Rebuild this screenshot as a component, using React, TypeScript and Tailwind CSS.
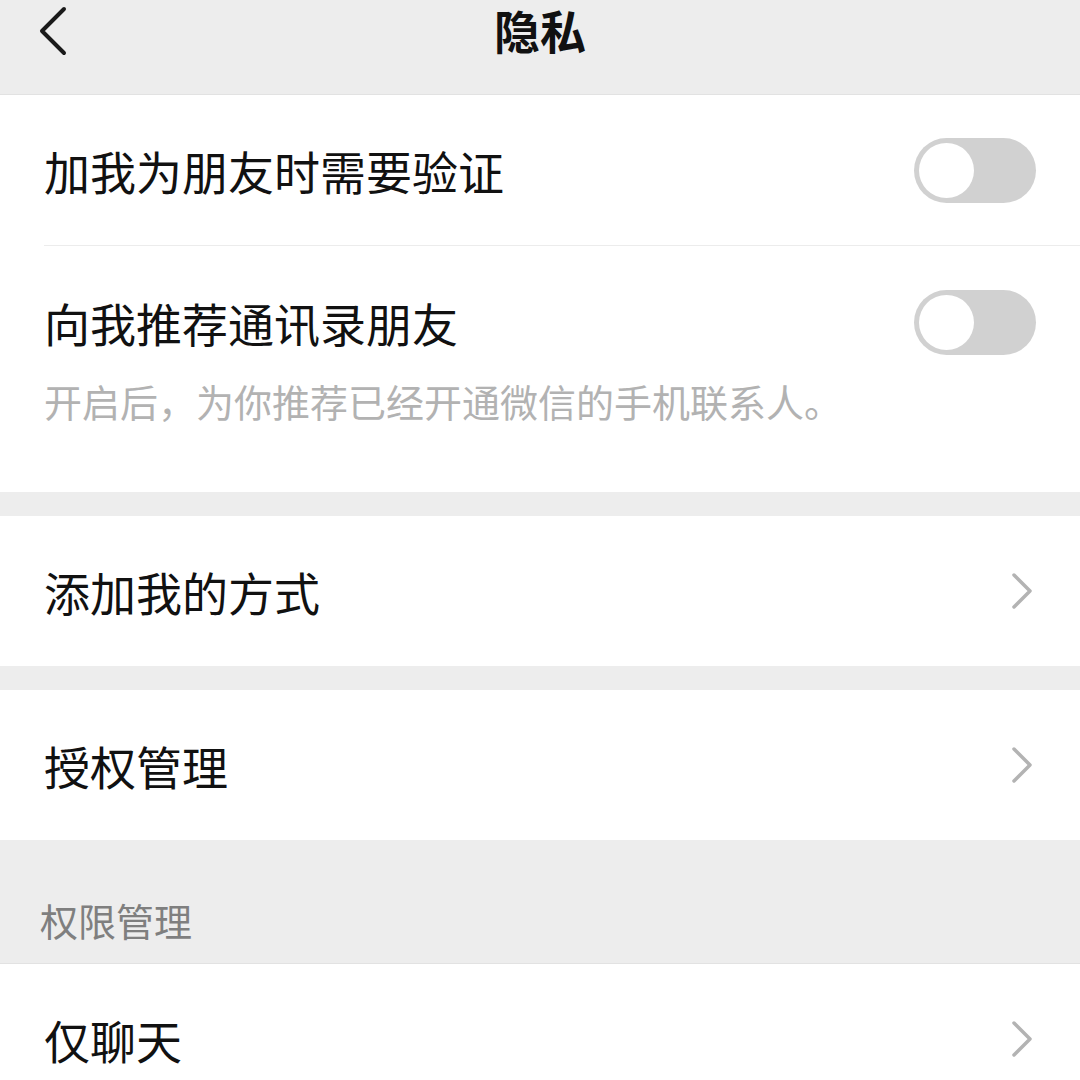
import React from "react";

const font = {
  fontFamily: '"Noto Sans CJK SC", "Noto Sans", sans-serif',
};

function Toggle() {
  return (
    <div className="w-[122px] h-[65px] rounded-full bg-[#d1d1d1] p-[5px] flex items-center shrink-0">
      <div className="w-[55px] h-[55px] rounded-full bg-white" />
    </div>
  );
}

function Chevron() {
  return (
    <svg width="24" height="40" viewBox="0 0 24 40" className="shrink-0 mr-[46px]">
      <polyline
        points="4,4 20,20 4,36"
        fill="none"
        stroke="#b3b3b3"
        strokeWidth="3.5"
        strokeLinecap="round"
        strokeLinejoin="round"
      />
    </svg>
  );
}

function LinkRow({ label }: { label: string }) {
  return (
    <div className="h-[150px] flex items-center justify-between pl-[44px] bg-white">
      <span className="text-[46px] text-[#111]">{label}</span>
      <Chevron />
    </div>
  );
}

export default function App() {
  return (
    <div className="w-[1080px] h-[1080px] overflow-hidden bg-[#ededed]" style={font}>
      {/* Header */}
      <header className="h-[95px] flex items-start justify-center relative border-b border-[#e2e2e2]">
        <svg
          width="40"
          height="56"
          viewBox="0 0 40 56"
          className="absolute left-[32px] top-[3px]"
        >
          <polyline
            points="32,6 10,28 32,50"
            fill="none"
            stroke="#1a1a1a"
            strokeWidth="4"
            strokeLinecap="round"
            strokeLinejoin="round"
          />
        </svg>
        <h1 className="text-[46px] font-semibold text-[#111] leading-[1.25] mt-[1px]">隐私</h1>
      </header>

      {/* Section 1 */}
      <section className="bg-white">
        <div className="h-[150px] flex items-center justify-between pl-[44px] pr-[44px]">
          <span className="text-[46px] text-[#111]">加我为朋友时需要验证</span>
          <Toggle />
        </div>
        <div className="ml-[44px] h-px bg-[#ececec]" />
        <div className="h-[246px] pl-[44px] pr-[44px] pt-[42px]">
          <div className="flex items-center justify-between">
            <span className="text-[46px] text-[#111]">向我推荐通讯录朋友</span>
            <Toggle />
          </div>
          <p className="text-[38px] text-[#b2b2b2] mt-[25px] leading-none">
            开启后，为你推荐已经开通微信的手机联系人。
          </p>
        </div>
      </section>

      <div className="h-[24px]" />
      <LinkRow label="添加我的方式" />
      <div className="h-[24px]" />
      <LinkRow label="授权管理" />

      {/* Section header */}
      <div className="h-[123px] flex items-end pl-[40px] pb-[24px]">
        <span className="text-[38px] text-[#7f7f7f] leading-none">权限管理</span>
      </div>

      <div className="border-t border-[#e2e2e2]">
        <LinkRow label="仅聊天" />
      </div>
    </div>
  );
}
